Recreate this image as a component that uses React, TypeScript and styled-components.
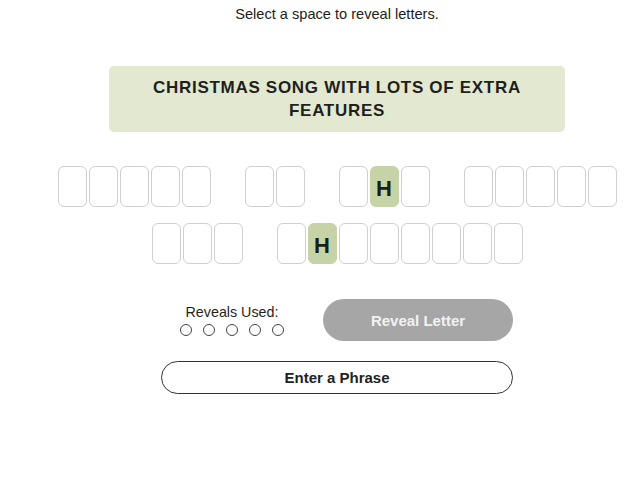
import React from "react";
import styled, { createGlobalStyle } from "styled-components";

const GlobalStyle = createGlobalStyle`
  html, body {
    margin: 0;
    padding: 0;
    background: #ffffff;
  }
  body {
    font-family: "Liberation Sans", Arial, sans-serif;
    color: #222222;
  }
`;

const Page = styled.main`
  box-sizing: border-box;
  width: 640px;
  padding: 6px 0 0 34px;
  display: flex;
  flex-direction: column;
  align-items: center;
`;

const Hint = styled.p`
  margin: 0;
  font-size: 14.6px;
  line-height: 17px;
  color: #1c1c1c;
`;

const ClueCard = styled.div`
  box-sizing: border-box;
  margin-top: 43px;
  width: 456px;
  padding: 10px 40px;
  background: #e3e9d0;
  border-radius: 5px;
  text-align: center;
  font-size: 17px;
  line-height: 23px;
  font-weight: 700;
  letter-spacing: 0.7px;
  color: #1f1f1f;
`;

const Board = styled.div`
  margin-top: 34px;
  display: flex;
  flex-direction: column;
  align-items: center;
  gap: 16px;
`;

const Line = styled.div`
  display: flex;
  gap: 34px;
`;

const Word = styled.div`
  display: flex;
  gap: 2px;
`;

const Tile = styled.div<{ $filled?: boolean }>`
  box-sizing: border-box;
  width: 29px;
  height: 41px;
  border-radius: 6px;
  border: 1.5px solid ${(p) => (p.$filled ? "#c5d3a6" : "#cfcfcf")};
  background: ${(p) => (p.$filled ? "#c5d3a6" : "#ffffff")};
  display: flex;
  align-items: center;
  justify-content: center;
  font-size: 22px;
  font-weight: 700;
  color: #1a1f16;
  padding-top: 4px;
`;

const Controls = styled.div`
  margin-top: 35px;
  width: 352px;
  display: flex;
  flex-direction: column;
  gap: 20px;
`;

const ControlRow = styled.div`
  display: flex;
  align-items: center;
  gap: 20px;
`;

const RevealCounter = styled.div`
  width: 142px;
  display: flex;
  flex-direction: column;
  align-items: center;
  gap: 4px;
`;

const CounterLabel = styled.span`
  font-size: 14.3px;
  line-height: 16px;
  color: #1f1f1f;
`;

const Dots = styled.div`
  display: flex;
  gap: 11px;
`;

const Dot = styled.span`
  box-sizing: border-box;
  width: 12px;
  height: 12px;
  border-radius: 50%;
  border: 1.5px solid #444444;
`;

const RevealButton = styled.button`
  box-sizing: border-box;
  width: 190px;
  height: 42px;
  border: none;
  border-radius: 21px;
  background: #a6a6a6;
  color: #f2f2f2;
  font-family: inherit;
  font-size: 15px;
  font-weight: 700;
`;

const PhraseButton = styled.button`
  box-sizing: border-box;
  width: 352px;
  height: 33px;
  border: 1.5px solid #333333;
  border-radius: 17px;
  background: #ffffff;
  color: #222222;
  font-family: inherit;
  font-size: 15px;
  font-weight: 700;
`;

// Each string is one word of the answer; a space is a blank tile.
const lines: string[][] = [
  ["     ", "  ", " H ", "     "],
  ["   ", " H      "],
];

export default function App() {
  return (
    <>
      <GlobalStyle />
      <Page>
        <Hint>Select a space to reveal letters.</Hint>
        <ClueCard>CHRISTMAS SONG WITH LOTS OF EXTRA FEATURES</ClueCard>
        <Board>
          {lines.map((words, li) => (
            <Line key={li}>
              {words.map((w, wi) => (
                <Word key={wi}>
                  {w.split("").map((ch, ci) => (
                    <Tile key={ci} $filled={ch !== " "}>
                      {ch.trim()}
                    </Tile>
                  ))}
                </Word>
              ))}
            </Line>
          ))}
        </Board>
        <Controls>
          <ControlRow>
            <RevealCounter>
              <CounterLabel>Reveals Used:</CounterLabel>
              <Dots>
                {Array.from({ length: 5 }).map((_, i) => (
                  <Dot key={i} />
                ))}
              </Dots>
            </RevealCounter>
            <RevealButton>Reveal Letter</RevealButton>
          </ControlRow>
          <PhraseButton>Enter a Phrase</PhraseButton>
        </Controls>
      </Page>
    </>
  );
}
